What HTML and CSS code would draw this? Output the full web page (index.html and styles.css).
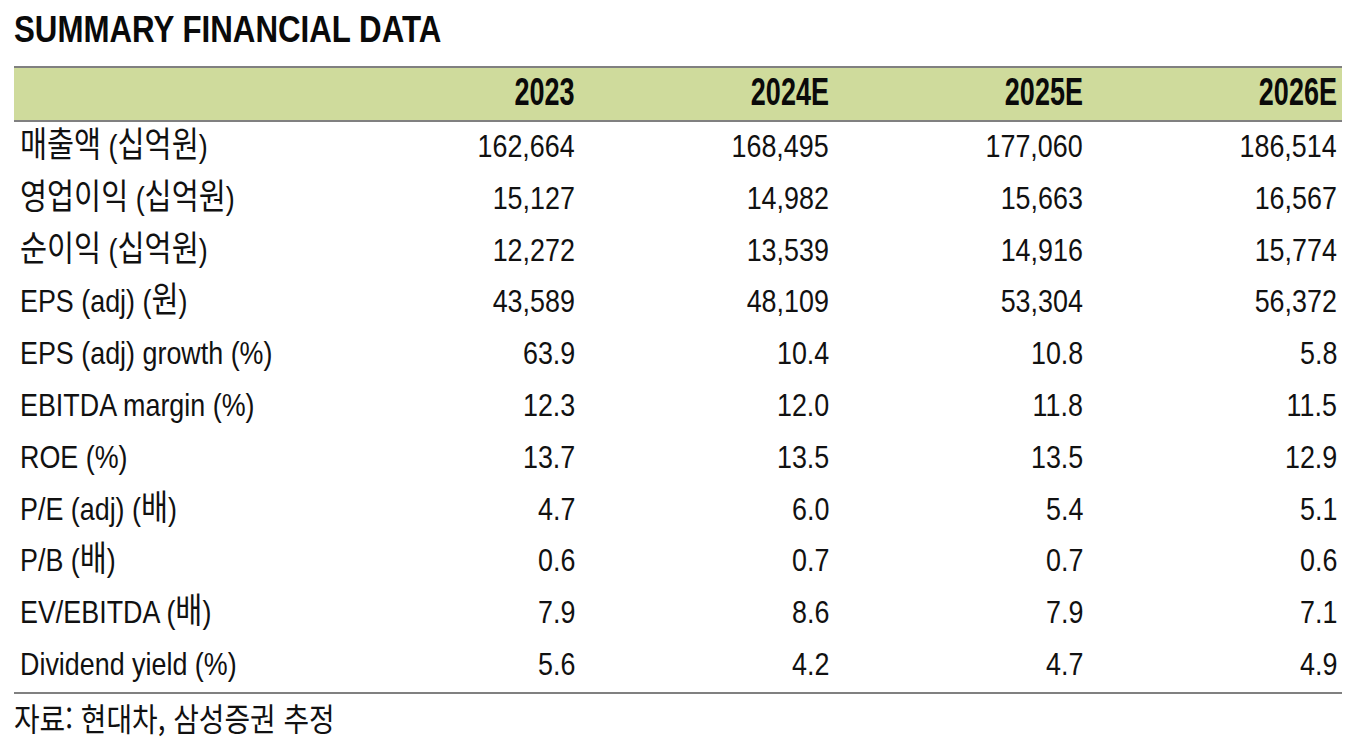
FILE: index.html
```html
<!DOCTYPE html>
<html lang="ko">
<head>
<meta charset="utf-8">
<title>Summary Financial Data</title>
<link rel="stylesheet" href="styles.css">
</head>
<body>
<div class="page">
  <h1 class="title"><span class="sq">SUMMARY FINANCIAL DATA</span></h1>
  <table class="fin">
    <colgroup>
      <col class="c-label">
      <col class="c-num">
      <col class="c-num">
      <col class="c-num">
      <col class="c-num">
    </colgroup>
    <thead>
      <tr><th></th><th><span class="sq">2023</span></th><th><span class="sq">2024E</span></th><th><span class="sq">2025E</span></th><th><span class="sq">2026E</span></th></tr>
    </thead>
    <tbody>
      <tr><td class="lbl"><span class="sq"><span class="ko">매출액</span> (<span class="ko">십억원</span>)</span></td><td><span class="sq">162,664</span></td><td><span class="sq">168,495</span></td><td><span class="sq">177,060</span></td><td><span class="sq">186,514</span></td></tr>
      <tr><td class="lbl"><span class="sq"><span class="ko">영업이익</span> (<span class="ko">십억원</span>)</span></td><td><span class="sq">15,127</span></td><td><span class="sq">14,982</span></td><td><span class="sq">15,663</span></td><td><span class="sq">16,567</span></td></tr>
      <tr><td class="lbl"><span class="sq"><span class="ko">순이익</span> (<span class="ko">십억원</span>)</span></td><td><span class="sq">12,272</span></td><td><span class="sq">13,539</span></td><td><span class="sq">14,916</span></td><td><span class="sq">15,774</span></td></tr>
      <tr><td class="lbl"><span class="sq">EPS (adj) (<span class="ko">원</span>)</span></td><td><span class="sq">43,589</span></td><td><span class="sq">48,109</span></td><td><span class="sq">53,304</span></td><td><span class="sq">56,372</span></td></tr>
      <tr><td class="lbl"><span class="sq">EPS (adj) growth (%)</span></td><td><span class="sq">63.9</span></td><td><span class="sq">10.4</span></td><td><span class="sq">10.8</span></td><td><span class="sq">5.8</span></td></tr>
      <tr><td class="lbl"><span class="sq">EBITDA margin (%)</span></td><td><span class="sq">12.3</span></td><td><span class="sq">12.0</span></td><td><span class="sq">11.8</span></td><td><span class="sq">11.5</span></td></tr>
      <tr><td class="lbl"><span class="sq">ROE (%)</span></td><td><span class="sq">13.7</span></td><td><span class="sq">13.5</span></td><td><span class="sq">13.5</span></td><td><span class="sq">12.9</span></td></tr>
      <tr><td class="lbl"><span class="sq">P/E (adj) (<span class="ko">배</span>)</span></td><td><span class="sq">4.7</span></td><td><span class="sq">6.0</span></td><td><span class="sq">5.4</span></td><td><span class="sq">5.1</span></td></tr>
      <tr><td class="lbl"><span class="sq">P/B (<span class="ko">배</span>)</span></td><td><span class="sq">0.6</span></td><td><span class="sq">0.7</span></td><td><span class="sq">0.7</span></td><td><span class="sq">0.6</span></td></tr>
      <tr><td class="lbl"><span class="sq">EV/EBITDA (<span class="ko">배</span>)</span></td><td><span class="sq">7.9</span></td><td><span class="sq">8.6</span></td><td><span class="sq">7.9</span></td><td><span class="sq">7.1</span></td></tr>
      <tr class="last"><td class="lbl"><span class="sq">Dividend yield (%)</span></td><td><span class="sq">5.6</span></td><td><span class="sq">4.2</span></td><td><span class="sq">4.7</span></td><td><span class="sq">4.9</span></td></tr>
    </tbody>
  </table>
  <p class="source"><span class="sq">자료: 현대차, 삼성증권 추정</span></p>
</div>
</body>
</html>
```

FILE: styles.css
```css
html, body {
  margin: 0;
  padding: 0;
  background: #ffffff;
}

body {
  color: #111111;
  font-family: "Liberation Sans", "Noto Sans CJK KR", sans-serif;
}

.page {
  width: 1328px;
  padding: 8px 0 0 14px;
}

/* condensed text: the report typeface is a narrow gothic */
.sq {
  display: inline-block;
  transform: scaleX(0.84);
  transform-origin: 0 50%;
  white-space: nowrap;
}

.title {
  margin: 0 0 14px 0;
  font-size: 37px;
  font-weight: bold;
  line-height: 44px;
  color: #0a0a0a;
}

.title .sq {
  transform: scaleX(0.845);
}

.fin {
  width: 1328px;
  table-layout: fixed;
  border-collapse: separate;
  border-spacing: 0;
}

.c-label {
  width: 312px;
}

.c-num {
  width: 254px;
}

.fin th {
  padding: 0 5px 4px 0;
  font-size: 38px;
  font-weight: bold;
  line-height: 48px;
  text-align: right;
  background: #cfdb9c;
  border-top: 2px solid #808080;
  border-bottom: 2px solid #808080;
  color: #0a0a0a;
}

.fin th .sq {
  transform: scaleX(0.71);
  transform-origin: 100% 50%;
}

.fin td {
  padding: 0 5px 3.8px 0;
  font-size: 32px;
  line-height: 48px;
  text-align: right;
  white-space: nowrap;
}

.fin td .sq {
  transform-origin: 100% 50%;
}

.fin td.lbl {
  padding-left: 6px;
  text-align: left;
}

.fin td.lbl .sq {
  transform-origin: 0 50%;
}

.fin tr.last td {
  border-bottom: 2px solid #808080;
}

.ko {
  font-family: "Noto Sans CJK KR", sans-serif;
  font-size: 35px;
  line-height: 1;
}

.source {
  margin: 0;
  padding-top: 3px;
  font-family: "Noto Sans CJK KR", sans-serif;
  font-size: 32px;
  line-height: 40px;
}

.source .sq {
  transform: scaleX(0.87);
}
```
